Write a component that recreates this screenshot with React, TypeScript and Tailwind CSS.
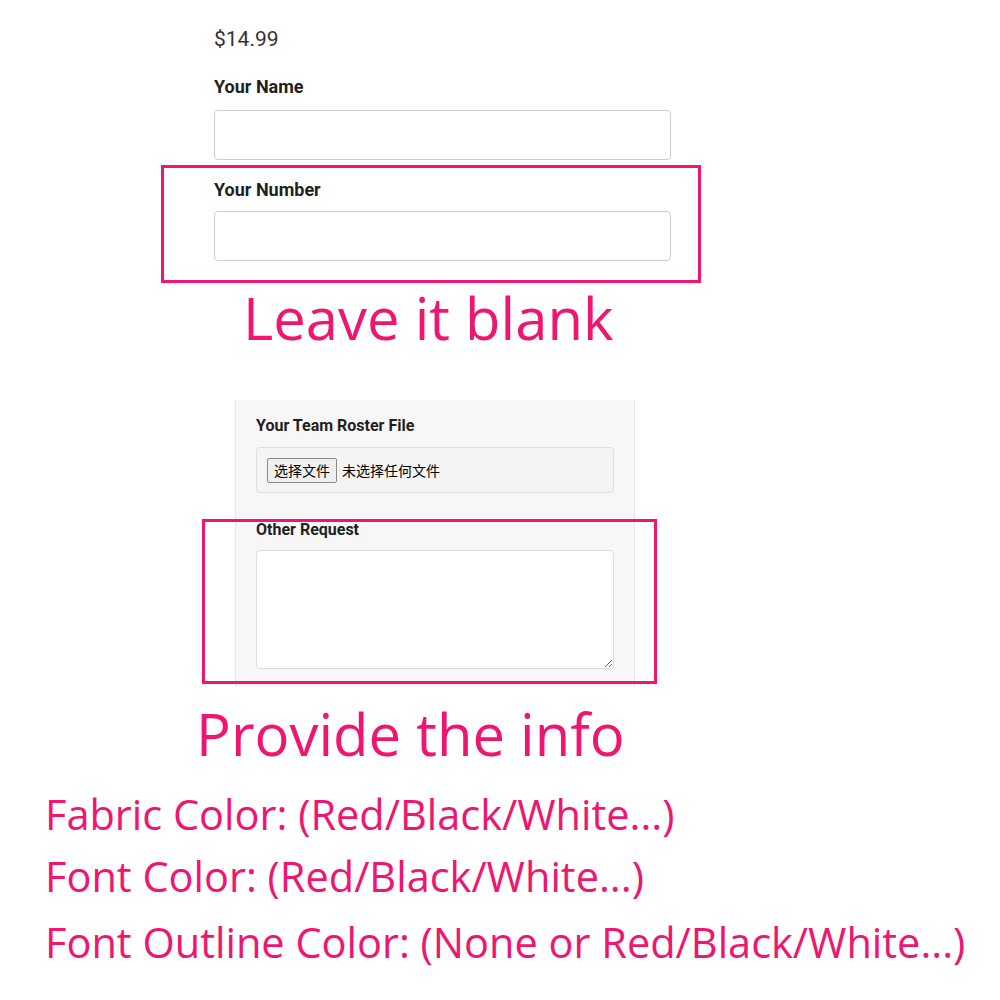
const pink = "text-[#ee1670]";

function Label({ children, className = "" }: { children: React.ReactNode; className?: string }) {
  return (
    <div className={`font-['Roboto',sans-serif] font-bold text-[#1f1f1f] ${className}`}>
      {children}
    </div>
  );
}

function TextInput() {
  return (
    <input
      type="text"
      className="block h-[50px] w-[457px] rounded-[4px] border border-[#cfcfcf] bg-white"
    />
  );
}

export default function App() {
  return (
    <div className="min-h-[1000px] w-[1000px] bg-white font-['Roboto',sans-serif]">
      {/* product form */}
      <div className="pl-[214px] pt-[24px]">
        <div className="h-[30px] text-[21px] leading-[30px] text-[#333]">$14.99</div>
        <Label className="mt-[21px] h-[24px] text-[18px] leading-[24px]">Your Name</Label>
        <div className="mt-[11px]">
          <TextInput />
        </div>
      </div>

      <div className="ml-[161px] mt-[5px] h-[118px] w-[540px] border-[3px] border-[#ee1670] pl-[50px] pr-[27px] pt-[10px]">
        <Label className="h-[24px] text-[18px] leading-[24px]">Your Number</Label>
        <div className="mt-[9px]">
          <TextInput />
        </div>
      </div>

      <div
        className={`ml-[243px] h-[70px] font-['Open_Sans',sans-serif] text-[58px] leading-[70px] ${pink}`}
      >
        Leave it blank
      </div>

      {/* upload panel */}
      <div className="ml-[235px] mt-[47px] w-[400px] border-x border-[#e6e6e6] bg-[#f7f7f7] pb-[3px] pl-[20px] pr-[20px] pt-[18px]">
        <Label className="h-[16px] text-[16px] leading-[16px]">Your Team Roster File</Label>
        <div className="mt-[13px] flex h-[46px] w-[358px] items-center rounded-[4px] border border-[#dedede] bg-[#f4f4f4] pl-[10px]">
          <span className="flex h-[25px] items-center rounded-[2px] border border-[#8a8a8a] bg-[#efefef] px-[6px] font-['Noto_Sans_CJK_SC',sans-serif] text-[14px] text-black">
            选择文件
          </span>
          <span className="ml-[5px] font-['Noto_Sans_CJK_SC',sans-serif] text-[14px] text-black">
            未选择任何文件
          </span>
        </div>

        <div className="-ml-[54px] mt-[26px] h-[165px] w-[455px] border-[3px] border-[#ee1670] pl-[51px]">
          <Label className="h-[16px] text-[16px] leading-[16px]">Other Request</Label>
          <textarea className="mt-[12px] block h-[119px] w-[358px] rounded-[4px] border border-[#dedede] bg-white" />
        </div>
      </div>

      {/* instructions */}
      <div className={`font-['Open_Sans',sans-serif] ${pink}`}>
        <div className="ml-[196px] mt-[11px] h-[72px] text-[58px] leading-[72px]">Provide the info</div>
        <div className="ml-[45px] mt-[13px] h-[62px] text-[41.5px] leading-[62px]">
          Fabric Color: (Red/Black/White...)
        </div>
        <div className="ml-[45px] h-[62px] text-[41.5px] leading-[62px]">Font Color: (Red/Black/White...)</div>
        <div className="ml-[45px] mt-[4px] h-[62px] text-[41.5px] leading-[62px]">
          Font Outline Color: (None or Red/Black/White...)
        </div>
      </div>
    </div>
  );
}
